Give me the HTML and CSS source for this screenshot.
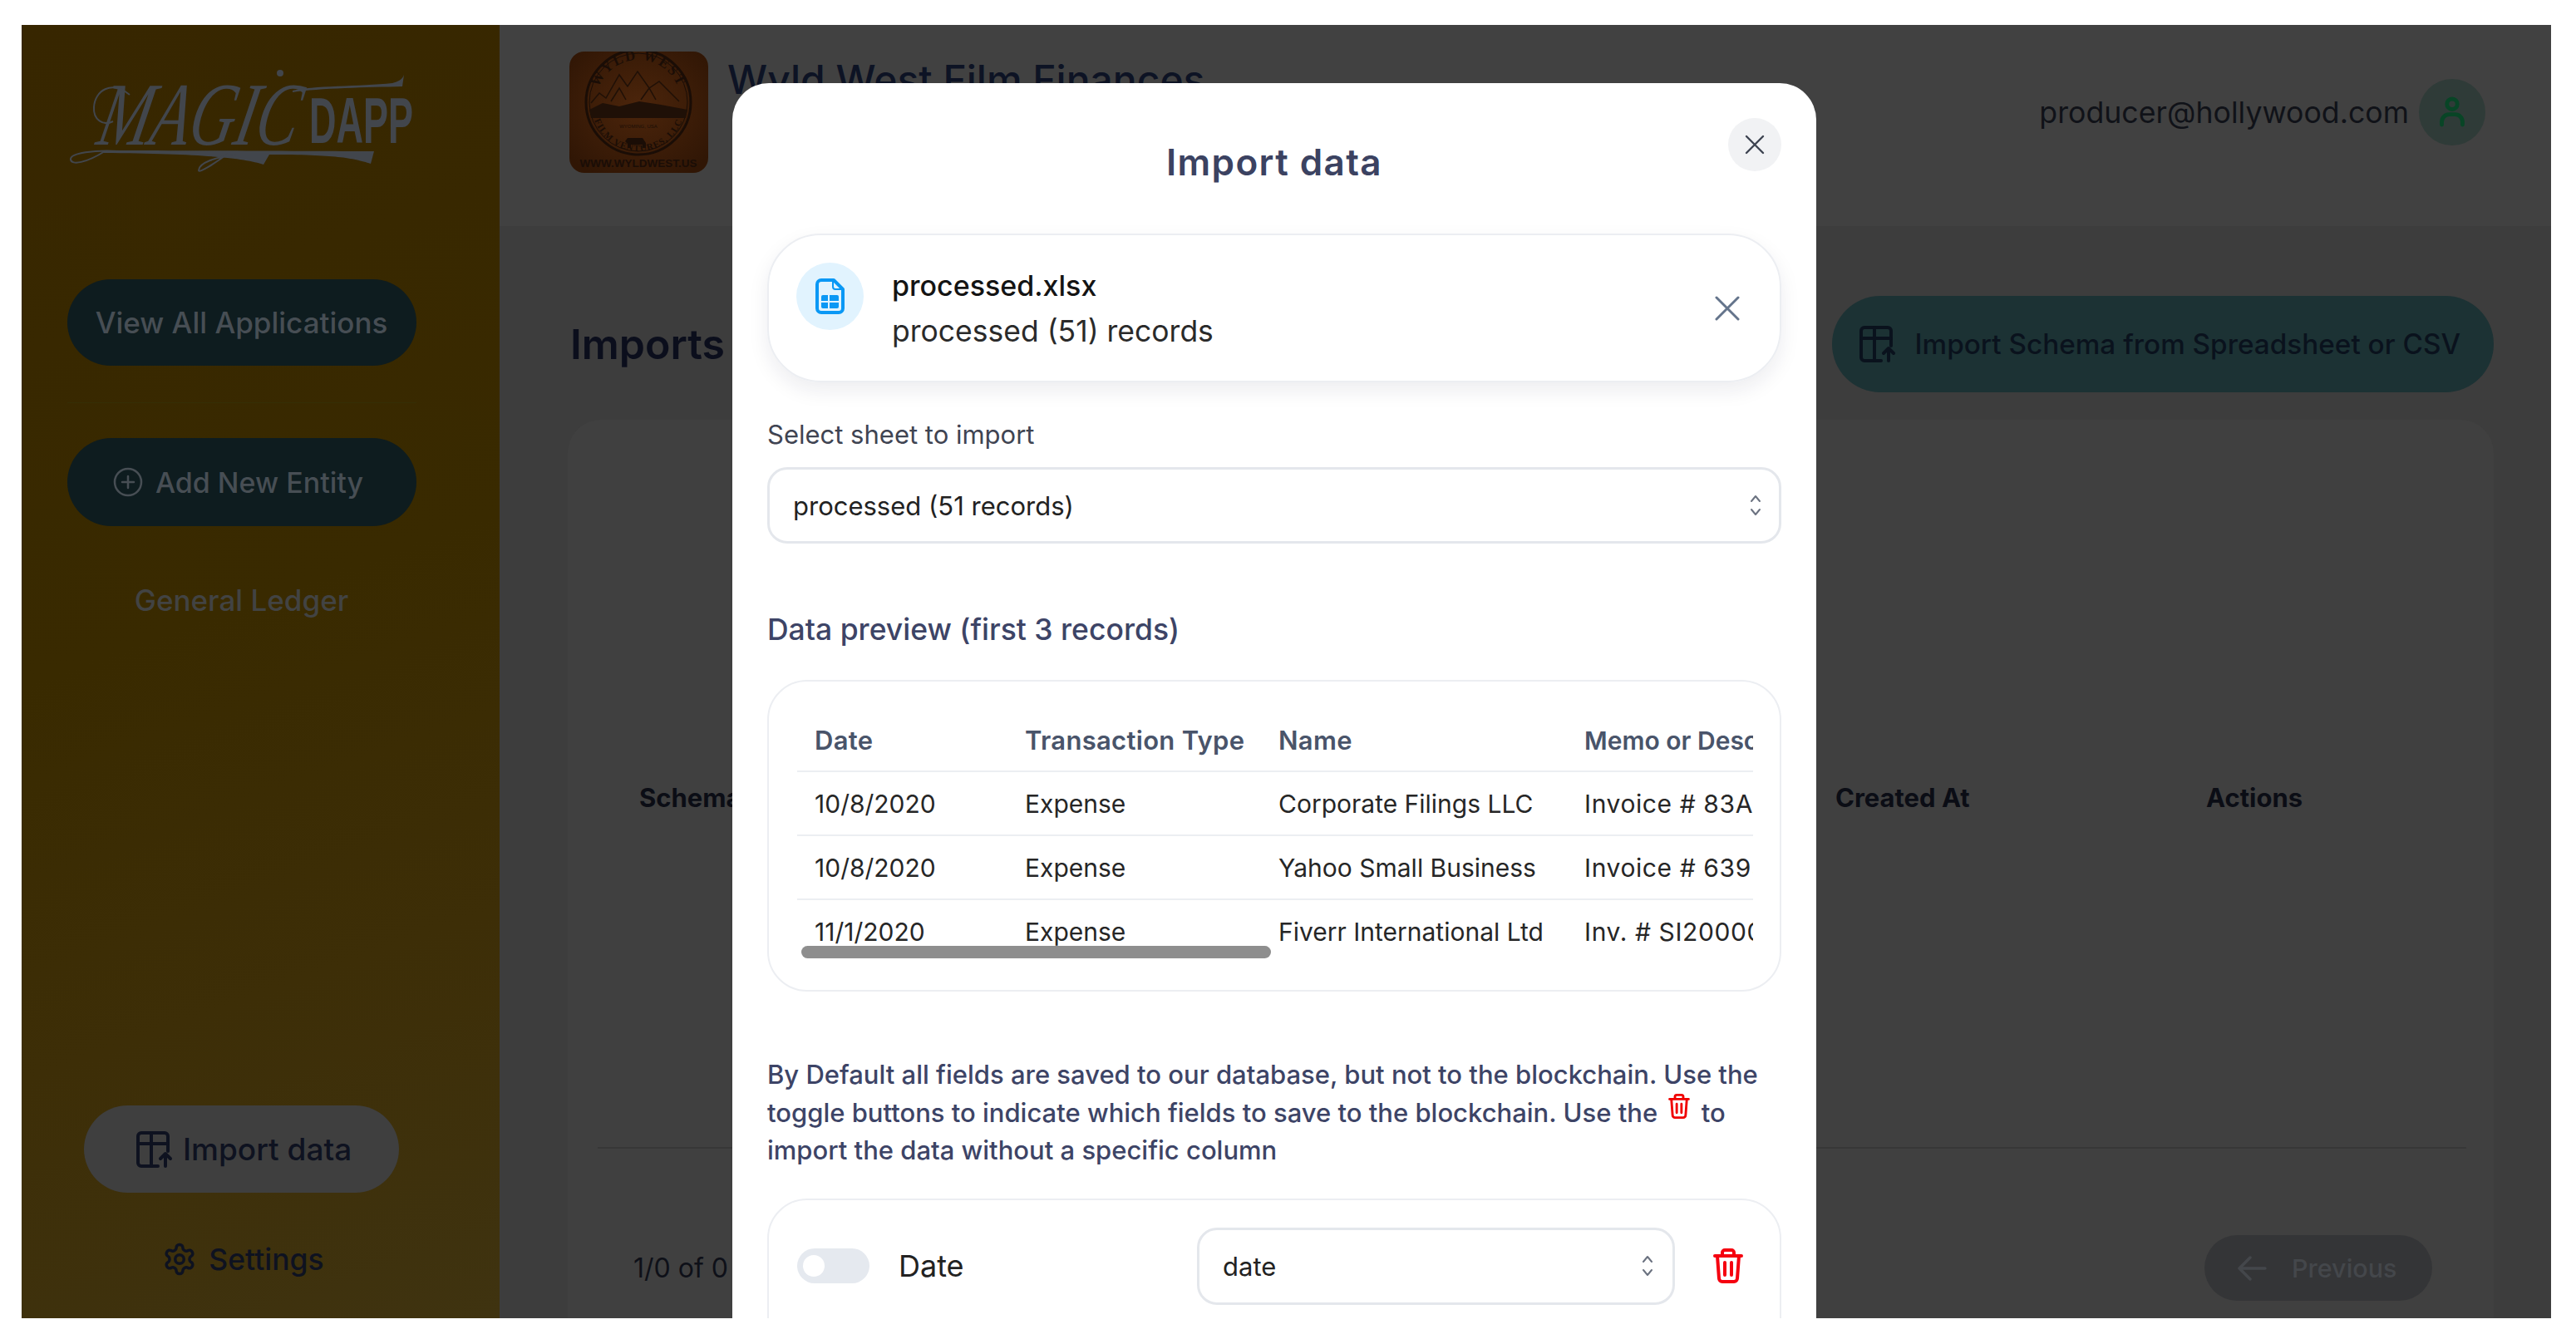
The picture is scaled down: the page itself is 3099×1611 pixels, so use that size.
FILE: index.html
```html
<!DOCTYPE html>
<html lang="en">
  <head>
    <meta charset="UTF-8" />
    <title>Imports - Magic Dapp</title>
    <link rel="stylesheet" href="styles.css">
  </head>
  <body>
    <svg class="defs" width="0" height="0" aria-hidden="true">
      <symbol id="i-table" viewBox="0 0 44 44" fill="none" stroke="currentColor" stroke-width="4" stroke-linecap="round" stroke-linejoin="round">
        <path d="M38 24V6a4 4 0 0 0-4-4H6a4 4 0 0 0-4 4v32a4 4 0 0 0 4 4h20" />
        <path d="M2 15h36M18 2v40" />
        <path d="M35 42V28M29 33l6-6 6 6" />
      </symbol>
      <symbol id="i-trash" viewBox="0 0 36 42" fill="none" stroke="currentColor" stroke-width="4" stroke-linecap="round" stroke-linejoin="round">
        <path d="M2 9h32M11 9V5a3 3 0 0 1 3-3h8a3 3 0 0 1 3 3v4" />
        <path d="M5 9l2 27a4 4 0 0 0 4 4h14a4 4 0 0 0 4-4l2-27" />
        <path d="M14 17v15M22 17v15" />
      </symbol>
      <symbol id="i-updown" viewBox="0 0 16 28" fill="none" stroke="currentColor" stroke-width="2" stroke-linecap="round" stroke-linejoin="round">
        <path d="M3 9l5-6 5 6M3 19l5 6 5-6" />
      </symbol>
    </svg>

    <div class="frame">
      <aside class="sidebar">
        <svg class="logo" viewBox="0 0 413 125" aria-label="Magic Dapp">
          <text class="logo-script" x="49" y="90" transform="skewX(-12)" textLength="240" lengthAdjust="spacingAndGlyphs">MAGIC</text>
          <text class="logo-dapp" x="288" y="88" textLength="125" lengthAdjust="spacingAndGlyphs">DAPP</text>
          <circle class="logo-fill" cx="253" cy="4" r="4" />
          <path class="logo-fill" d="M40 97C150 97 300 98 366 98L362 113C340 106 320 102 240 102L233 114C210 106 160 101 40 100Z" />
          <path class="logo-fill" d="M268 25C290 19 350 20 388 16C395 14 400 12 402 6L400 20C360 21 300 22 268 27Z" />
          <path class="logo-line" d="M42 98C20 112 2 115 1 108C0 100 30 96 60 98M190 101C175 112 155 125 155 121C155 112 175 105 200 102" />
          <path class="logo-line" d="M72 30C50 12 30 25 29 45C28 60 40 68 52 62" />
        </svg>
        <a class="side-btn first">View All Applications</a>
        <div class="side-rule"></div>
        <a class="side-btn add">
          <svg class="plus" viewBox="0 0 36 36" fill="none" stroke="currentColor" stroke-width="2.5" stroke-linecap="round">
            <circle cx="18" cy="18" r="16" />
            <path d="M18 11v14M11 18h14" />
          </svg>
          Add New Entity
        </a>
        <a class="side-link">General Ledger</a>
        <a class="import-pill">
          <svg class="icon-table"><use href="#i-table" /></svg>
          Import data
        </a>
        <a class="settings">
          <svg class="gear" viewBox="0 0 24 24" fill="none" stroke="currentColor" stroke-width="2" stroke-linecap="round" stroke-linejoin="round">
            <path d="M12.22 2h-.44a2 2 0 0 0-2 2v.18a2 2 0 0 1-1 1.73l-.43.25a2 2 0 0 1-2 0l-.15-.08a2 2 0 0 0-2.73.73l-.22.38a2 2 0 0 0 .73 2.73l.15.1a2 2 0 0 1 1 1.72v.51a2 2 0 0 1-1 1.74l-.15.09a2 2 0 0 0-.73 2.73l.22.38a2 2 0 0 0 2.73.73l.15-.08a2 2 0 0 1 2 0l.43.25a2 2 0 0 1 1 1.73V20a2 2 0 0 0 2 2h.44a2 2 0 0 0 2-2v-.18a2 2 0 0 1 1-1.73l.43-.25a2 2 0 0 1 2 0l.15.08a2 2 0 0 0 2.73-.73l.22-.39a2 2 0 0 0-.73-2.73l-.15-.08a2 2 0 0 1-1-1.74v-.5a2 2 0 0 1 1-1.74l.15-.09a2 2 0 0 0 .73-2.73l-.22-.38a2 2 0 0 0-2.73-.73l-.15.08a2 2 0 0 1-2 0l-.43-.25a2 2 0 0 1-1-1.73V4a2 2 0 0 0-2-2z" />
            <circle cx="12" cy="12" r="3" />
          </svg>
          Settings
        </a>
      </aside>

      <main class="main">
        <header class="topbar">
          <svg class="thumb" viewBox="0 0 167 146" aria-label="Wyld West Film Ventures">
            <defs>
              <path id="arc-top" d="M32 61a51 51 0 0 1 102 0" />
              <path id="arc-bot" d="M27 64a56 56 0 0 0 112 0" />
              <radialGradient id="thumb-tone" cx="50%" cy="45%" r="65%">
                <stop offset="0%" stop-color="#4c250b" />
                <stop offset="100%" stop-color="#301605" />
              </radialGradient>
            </defs>
            <rect fill="url(#thumb-tone)" width="167" height="146" rx="18" />
            <circle class="thumb-ring" cx="83" cy="61" r="63" />
            <circle class="thumb-ring thin" cx="83" cy="61" r="59" />
            <text class="thumb-arc"><textPath href="#arc-top" startOffset="50%">WYLD WEST</textPath></text>
            <path class="thumb-peaks" d="M26 62L36 50L44 56L60 28L70 42L82 24L96 44L108 36L132 60M50 60L60 44L68 58M86 58L96 44L104 58" />
            <path class="thumb-hills" d="M24 70L40 62L60 66L84 60L110 64L142 70L140 80H26Z" />
            <text class="thumb-small" x="83" y="92">WYOMING, USA</text>
            <path class="thumb-bison" d="M70 104h18l4 6v6h-4v-4H74v4h-4v-5l-3-3Z" />
            <text class="thumb-arc small"><textPath href="#arc-bot" startOffset="50%">FILM VENTURES, LLC</textPath></text>
            <text class="thumb-url" x="83" y="139">WWW.WYLDWEST.US</text>
          </svg>
          <h1 class="company">Wyld West Film Finances</h1>
          <span class="user-mail">producer@hollywood.com</span>
          <span class="avatar">
            <svg viewBox="0 0 36 40" fill="none" stroke="currentColor" stroke-width="5.5" stroke-linecap="round">
              <circle cx="18" cy="9" r="7" />
              <path d="M4 37v-4a10 10 0 0 1 10-10h8a10 10 0 0 1 10 10v4" />
            </svg>
          </span>
        </header>

        <section class="content">
          <div class="title-row">
            <h2 class="page-title">Imports</h2>
            <a class="schema-btn">
              <svg class="icon-table"><use href="#i-table" /></svg>
              Import Schema from Spreadsheet or CSV
            </a>
          </div>
          <div class="imports-card">
            <div class="imports-head">
              <span>Schema Name</span>
              <span>Created At</span>
              <span>Actions</span>
            </div>
            <div class="imports-rule"></div>
            <div class="imports-foot">
              <span>1/0 of 0 records</span>
              <a class="prev-btn">
                <svg viewBox="0 0 36 32" fill="none" stroke="currentColor" stroke-width="3.5" stroke-linecap="round" stroke-linejoin="round">
                  <path d="M34 16H3M16 3L3 16l13 13" />
                </svg>
                Previous
              </a>
            </div>
          </div>
        </section>
      </main>

      <div class="modal">
        <button class="modal-close" type="button" aria-label="Close">
          <svg viewBox="0 0 24 24" fill="none" stroke="currentColor" stroke-width="2.4" stroke-linecap="round"><path d="M2 2l20 20M22 2L2 22" /></svg>
        </button>
        <h2 class="modal-title">Import data</h2>

        <div class="file-card">
          <span class="file-icon">
            <svg viewBox="0 0 35 43">
              <path class="doc" d="M7 2h15l11 11v23a5 5 0 0 1-5 5H7a5 5 0 0 1-5-5V7a5 5 0 0 1 5-5Z" />
              <path class="doc-fold" d="M21 3v7a3 3 0 0 0 3 3h8" />
              <rect class="doc-grid" x="7" y="20" width="21" height="16" rx="2" />
              <path class="doc-cut" d="M7 28h21M16 20v16" />
            </svg>
          </span>
          <div class="file-text">
            <div class="file-name">processed.xlsx</div>
            <div class="file-sub">processed (51) records</div>
          </div>
          <svg class="file-remove" viewBox="0 0 30 30" fill="none" stroke="currentColor" stroke-width="3" stroke-linecap="round"><path d="M2 2l26 26M28 2L2 28" /></svg>
        </div>

        <label class="field-label">Select sheet to import</label>
        <div class="select">
          processed (51 records)
          <svg class="updown"><use href="#i-updown" /></svg>
        </div>

        <h3 class="preview-title">Data preview (first 3 records)</h3>
        <div class="preview-card">
          <div class="preview-scroll">
            <table class="preview">
              <thead>
                <tr><th>Date</th><th>Transaction Type</th><th>Name</th><th>Memo or Description</th></tr>
              </thead>
              <tbody>
                <tr><td>10/8/2020</td><td>Expense</td><td>Corporate Filings LLC</td><td>Invoice # 83A7710</td></tr>
                <tr><td>10/8/2020</td><td>Expense</td><td>Yahoo Small Business</td><td>Invoice # 63955</td></tr>
                <tr><td>11/1/2020</td><td>Expense</td><td>Fiverr International Ltd</td><td>Inv. # SI2000001</td></tr>
              </tbody>
            </table>
            <div class="scroll-thumb"></div>
          </div>
        </div>

        <p class="help">By Default all fields are saved to our database, but not to the blockchain. Use the toggle buttons to indicate which fields to save to the blockchain. Use the <svg class="trash-inline"><use href="#i-trash" /></svg> to import the data without a specific column</p>

        <div class="field-card">
          <span class="toggle"><span class="knob"></span></span>
          <span class="field-name">Date</span>
          <div class="select small">
            date
            <svg class="updown"><use href="#i-updown" /></svg>
          </div>
          <svg class="trash-btn"><use href="#i-trash" /></svg>
        </div>
      </div>
    </div>
  </body>
</html>
```

FILE: styles.css
```css
* {
  box-sizing: border-box;
}

body {
  margin: 0;
  background: #fff;
  font-family: Inter, "Open Sans", sans-serif;
  color: #1c1c1c;
}

h1,
h2,
h3,
p {
  margin: 0;
}

.defs {
  position: absolute;
}

.frame {
  position: relative;
  display: flex;
  width: 3043px;
  height: 1556px;
  margin: 30px 0 0 26px;
  overflow: hidden;
  background: #404040;
}

/* sidebar */
.sidebar {
  display: flex;
  flex-direction: column;
  align-items: center;
  flex: 0 0 575px;
  padding: 54px 46px 0 0;
  background: linear-gradient(160deg, #372600 0%, #392a00 45%, #3d2e07 72%, #3f3310 100%);
}

.logo {
  flex: none;
  width: 413px;
  height: 125px;
  margin-bottom: 127px;
  overflow: visible;
}

.logo-script {
  font-family: "Liberation Serif", serif;
  font-style: italic;
  font-size: 108px;
  fill: #42464c;
}

.logo-dapp {
  font-family: "Liberation Sans", sans-serif;
  font-weight: 700;
  font-size: 78px;
  fill: #42464c;
}

.logo-fill {
  fill: #42464c;
}

.logo-line {
  fill: none;
  stroke: #42464c;
  stroke-width: 2;
}

.side-btn {
  display: flex;
  align-items: center;
  justify-content: center;
  gap: 17px;
  width: 420px;
  height: 106px;
  border-radius: 53px;
  background: #0e1c1f;
  color: #474e54;
  font-size: 34px;
  font-weight: 500;
}

.side-btn.first {
  height: 104px;
  font-size: 35px;
}

.side-btn.add {
  gap: 15px;
  padding-right: 8px;
}

.side-rule {
  width: 420px;
  height: 1px;
  margin: 44px 0 42px;
  background: #352e05;
}

.plus {
  width: 36px;
  height: 36px;
}

.side-link {
  margin-top: 68px;
  color: #424343;
  font-size: 35px;
  font-weight: 500;
}

.import-pill {
  display: flex;
  align-items: center;
  gap: 12px;
  width: 379px;
  height: 105px;
  margin-top: auto;
  padding-left: 63px;
  border-radius: 53px;
  background: #3f3f3f;
  color: #0e1220;
  font-size: 37px;
  font-weight: 500;
}

.icon-table {
  flex: none;
  width: 44px;
  height: 44px;
}

.settings {
  display: flex;
  align-items: center;
  gap: 14px;
  height: 44px;
  margin: 58px 0 49px;
  padding-left: 4px;
  color: #0e1220;
  font-size: 35.5px;
  font-weight: 500;
}

.gear {
  width: 42px;
  height: 42px;
}

/* main area, dimmed behind the modal */
.main {
  display: flex;
  flex-direction: column;
  flex: 1;
  min-width: 0;
}

.topbar {
  display: flex;
  flex: none;
  align-items: center;
  height: 242px;
  padding: 0 79px 32px 84px;
  background: #414141;
}

.thumb {
  flex: none;
  width: 167px;
  height: 146px;
}

.thumb-ring {
  fill: none;
  stroke: #1a0d06;
  stroke-width: 3;
}

.thumb-ring.thin {
  stroke-width: 1;
}

.thumb-arc {
  font-family: "Liberation Serif", serif;
  font-weight: 700;
  font-size: 17px;
  letter-spacing: 2px;
  text-anchor: middle;
  fill: #1a0d06;
}

.thumb-arc.small {
  font-size: 11px;
  letter-spacing: 1px;
}

.thumb-peaks {
  fill: none;
  stroke: #1f1007;
  stroke-width: 1.5;
}

.thumb-hills {
  fill: #1f1007;
}

.thumb-small {
  font-family: "Liberation Sans", sans-serif;
  font-size: 6px;
  text-anchor: middle;
  fill: #1a0d06;
}

.thumb-bison {
  fill: #1a0d06;
}

.thumb-url {
  font-family: "Liberation Sans", sans-serif;
  font-weight: 700;
  font-size: 13.5px;
  text-anchor: middle;
  fill: #1a0d06;
}

.company {
  align-self: flex-start;
  margin: 33px 0 0 23px;
  color: #0d1324;
  font-size: 48px;
  font-weight: 500;
  line-height: 66px;
  white-space: nowrap;
}

.user-mail {
  margin-left: auto;
  color: #101218;
  font-size: 35.7px;
}

.avatar {
  display: flex;
  align-items: center;
  justify-content: center;
  width: 80px;
  height: 80px;
  margin-left: 12px;
  border-radius: 50%;
  background: #2f3b38;
  color: #084526;
}

.avatar svg {
  width: 32px;
  height: 38px;
}

.content {
  flex: 1;
  min-height: 0;
  padding: 84px 69px 0 82px;
  background: #3d3d3d;
}

.title-row {
  display: flex;
  align-items: center;
  justify-content: space-between;
}

.page-title {
  margin-left: 3px;
  color: #0b0e1c;
  font-size: 50px;
  font-weight: 600;
}

.schema-btn {
  display: flex;
  align-items: center;
  gap: 22px;
  height: 116px;
  padding: 0 40px 0 33px;
  border-radius: 58px;
  background: #1c3234;
  color: #0a121d;
  font-size: 33.3px;
  font-weight: 500;
}

.imports-card {
  height: 1200px;
  margin-top: 33px;
  padding: 435px 33px 0 36px;
  border-radius: 40px;
  background: #404040;
}

.imports-head {
  display: grid;
  grid-template-columns: 1439px 446px 1fr;
  height: 40px;
  padding-left: 50px;
  color: #0b0d15;
  font-size: 31px;
  font-weight: 700;
  line-height: 40px;
  white-space: nowrap;
}

.imports-rule {
  height: 2px;
  margin-top: 400px;
  background: #373737;
}

.imports-foot {
  display: flex;
  align-items: center;
  justify-content: space-between;
  height: 79px;
  margin-top: 104px;
  padding: 0 41px 0 43px;
  color: #0e1018;
  font-size: 32px;
}

.prev-btn {
  display: flex;
  align-items: center;
  gap: 30px;
  width: 274px;
  height: 79px;
  padding-left: 39px;
  border-radius: 40px;
  background: #343537;
  color: #44474b;
  font-size: 30.5px;
  font-weight: 500;
}

.prev-btn svg {
  width: 36px;
  height: 32px;
}

/* modal */
.modal {
  position: absolute;
  top: 70px;
  left: 855px;
  width: 1304px;
  padding: 65px 42px 60px;
  border-radius: 44px 44px 0 0;
  background: #fff;
}

.modal-close {
  position: absolute;
  top: 42px;
  right: 42px;
  display: flex;
  align-items: center;
  justify-content: center;
  width: 64px;
  height: 64px;
  padding: 0;
  border: none;
  border-radius: 50%;
  background: #f1f2f4;
  color: #3d4350;
}

.modal-close svg {
  width: 24px;
  height: 24px;
}

.modal-title {
  color: #3b4261;
  font-size: 44px;
  font-weight: 600;
  letter-spacing: 1.4px;
  line-height: 60px;
  text-align: center;
}

.file-card {
  display: flex;
  align-items: center;
  height: 179px;
  margin-top: 56px;
  padding: 0 48px 0 33px;
  border: 2px solid #eceef2;
  border-radius: 64px;
  box-shadow: 0 10px 24px rgba(20, 30, 60, 0.08);
}

.file-icon {
  display: flex;
  align-items: center;
  justify-content: center;
  align-self: flex-start;
  width: 81px;
  height: 81px;
  margin: 33px 34px 0 0;
  border-radius: 50%;
  background: #e1f3fe;
}

.file-icon svg {
  width: 35px;
  height: 43px;
}

.doc {
  fill: #e1f3fe;
  stroke: #0a98f5;
  stroke-width: 4;
  stroke-linejoin: round;
}

.doc-fold {
  fill: none;
  stroke: #0a98f5;
  stroke-width: 2;
}

.doc-grid {
  fill: #0a98f5;
}

.doc-cut {
  fill: none;
  stroke: #e1f3fe;
  stroke-width: 2;
}

.file-text {
  flex: 1;
  line-height: 55px;
}

.file-name {
  color: #141414;
  font-size: 34px;
  font-weight: 500;
}

.file-sub {
  color: #2a2a2a;
  font-size: 35.5px;
}

.file-remove {
  width: 30px;
  height: 30px;
  color: #64748b;
}

.field-label {
  display: block;
  margin-top: 41px;
  color: #3f4452;
  font-size: 31px;
  line-height: 44px;
}

.select {
  display: flex;
  align-items: center;
  justify-content: space-between;
  height: 92px;
  margin-top: 17px;
  padding: 0 20px 0 28px;
  border: 3px solid #e4e7ec;
  border-radius: 24px;
  background: #fff;
  color: #222;
  font-size: 31px;
}

.updown {
  flex: none;
  width: 16px;
  height: 28px;
  color: #6b7280;
}

.select.small {
  flex: none;
  width: 575px;
  height: 93px;
  margin: 0;
  padding-right: 22px;
}

.preview-title {
  margin-top: 79px;
  color: #3d4466;
  font-size: 35.5px;
  font-weight: 500;
  line-height: 50px;
}

.preview-card {
  height: 375px;
  margin-top: 35px;
  padding: 34px 32px 0 34px;
  border: 2px solid #eceef2;
  border-radius: 48px;
}

.preview-scroll {
  position: relative;
  height: 299px;
  overflow: hidden;
}

.preview {
  width: 1426px;
  border-collapse: collapse;
  table-layout: fixed;
  font-size: 30px;
  white-space: nowrap;
}

.preview th,
.preview td {
  padding: 0 0 0 21px;
  text-align: left;
  border-bottom: 2px solid #eceef2;
}

.preview th {
  height: 74px;
  color: #49546a;
  font-size: 31px;
  font-weight: 600;
  letter-spacing: 0.3px;
}

.preview th:nth-child(1) {
  width: 253px;
}

.preview th:nth-child(2) {
  width: 305px;
}

.preview th:nth-child(3) {
  width: 368px;
}

.preview th:nth-child(4) {
  font-size: 30px;
  letter-spacing: 0;
}

.preview td {
  height: 77px;
  color: #262626;
}

.preview td:nth-child(4) {
  letter-spacing: 0.6px;
}

.scroll-thumb {
  position: absolute;
  left: 5px;
  bottom: 0;
  width: 565px;
  height: 15px;
  border-radius: 8px;
  background: #8e8e8e;
}

.help {
  margin-top: 77px;
  color: #3d4466;
  font-size: 31px;
  font-weight: 500;
  line-height: 45.5px;
}

.trash-inline {
  width: 26px;
  height: 30px;
  margin: 0 5px;
  color: #f00000;
  vertical-align: 4px;
}

.field-card {
  display: flex;
  align-items: flex-start;
  height: 240px;
  margin-top: 35px;
  padding: 33px 0 0 34px;
  border: 2px solid #eceef2;
  border-radius: 48px;
}

.toggle {
  flex: none;
  display: flex;
  align-items: center;
  width: 87px;
  height: 42px;
  margin: 25px 35px 0 0;
  padding-left: 7px;
  border-radius: 21px;
  background: #e5e9ef;
}

.knob {
  width: 26px;
  height: 26px;
  border-radius: 50%;
  background: #fff;
}

.field-name {
  width: 359px;
  color: #222;
  font-size: 36px;
  line-height: 92px;
}

.trash-btn {
  flex: none;
  width: 36px;
  height: 42px;
  margin: 25px 0 0 46px;
  color: #f5000f;
}
```
